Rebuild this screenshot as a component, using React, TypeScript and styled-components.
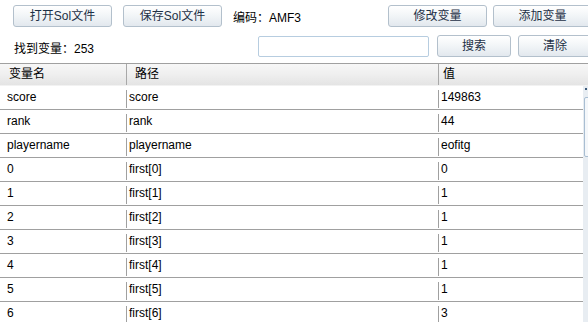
import styled, { createGlobalStyle } from 'styled-components'

const GlobalStyle = createGlobalStyle`
  html, body {
    margin: 0;
    padding: 0;
    background: #fff;
    overflow: hidden;
  }
  body {
    font-family: "Liberation Sans", "Noto Sans CJK SC", sans-serif;
    font-size: 12px;
    color: #000;
  }
`

const rows: [string, string, string][] = [
  ['score', 'score', '149863'],
  ['rank', 'rank', '44'],
  ['playername', 'playername', 'eofitg'],
  ['0', 'first[0]', '0'],
  ['1', 'first[1]', '1'],
  ['2', 'first[2]', '1'],
  ['3', 'first[3]', '1'],
  ['4', 'first[4]', '1'],
  ['5', 'first[5]', '1'],
  ['6', 'first[6]', '3'],
]

const App = () => {
  return (
    <StyledPage>
      <GlobalStyle />
      <StyledToolbar>
        <StyledButton>打开Sol文件</StyledButton>
        <StyledButton $gap={11}>保存Sol文件</StyledButton>
        <StyledLabel>编码：AMF3</StyledLabel>
        <StyledButton $push>修改变量</StyledButton>
        <StyledButton $gap={6}>添加变量</StyledButton>
      </StyledToolbar>

      <StyledSearchBar>
        <StyledCount>找到变量：253</StyledCount>
        <StyledInput type="text" />
        <StyledButton $width={74} $gap={8}>
          搜索
        </StyledButton>
        <StyledButton $width={74} $gap={7}>
          清除
        </StyledButton>
      </StyledSearchBar>

      <StyledTable>
        <StyledHeader>
          <StyledHeadCell $pad={9}>变量名</StyledHeadCell>
          <StyledHeadCell $pad={8} $line>
            路径
          </StyledHeadCell>
          <StyledHeadCell $pad={4} $line>
            值
          </StyledHeadCell>
        </StyledHeader>
        <StyledBody>
          <StyledRows>
            {rows.map(([name, path, value]) => (
              <StyledRow key={path}>
                <StyledCell>{name}</StyledCell>
                <StyledCell $line>{path}</StyledCell>
                <StyledCell $line>{value}</StyledCell>
              </StyledRow>
            ))}
          </StyledRows>
          <StyledScrollbar>
            <div className="arrow" />
            <div className="thumb" />
          </StyledScrollbar>
        </StyledBody>
      </StyledTable>
    </StyledPage>
  )
}

const StyledPage = styled.div`
  width: 600px;
  height: 322px;
  overflow: hidden;
`

const StyledToolbar = styled.div`
  display: flex;
  align-items: center;
  height: 22px;
  padding: 5px 0 0 13px;
  width: 579px;
`

const StyledButton = styled.button<{ $width?: number; $gap?: number; $push?: boolean }>`
  flex-shrink: 0;
  width: ${(props) => props.$width || 99}px;
  height: 22px;
  margin-left: ${(props) => (props.$push ? 'auto' : `${props.$gap || 0}px`)};
  padding: 0;
  border: 1px solid #b3c0cc;
  border-radius: 3px;
  background: linear-gradient(#ffffff 0%, #f3f6f8 45%, #e2e8ee 100%);
  font-family: "Liberation Sans", "Noto Sans CJK SC", sans-serif;
  font-size: 12px;
  color: #1d3046;
  line-height: 20px;
  text-align: center;
`

const StyledLabel = styled.span`
  margin-left: 11px;
  white-space: nowrap;
`

const StyledSearchBar = styled.div`
  display: flex;
  align-items: center;
  height: 22px;
  padding: 8px 0 0 0;
  margin-bottom: 6px;
`

const StyledCount = styled.span`
  width: 244px;
  padding-left: 14px;
  margin-top: 2px;
  white-space: nowrap;
`

const StyledInput = styled.input`
  box-sizing: border-box;
  width: 171px;
  height: 21px;
  margin: 1px 0 0 0;
  padding: 0 3px;
  border: 1px solid #b7cde0;
  border-radius: 2px;
  background: #fff;
  outline: none;
`

const StyledTable = styled.div`
  border-top: 1px solid #a0a0a0;
`

const StyledHeader = styled.div`
  display: grid;
  grid-template-columns: 126px 312px 1fr;
  height: 21px;
  background: linear-gradient(#f7f7f7 0%, #efefef 50%, #e4e4e4 100%);
  border-bottom: 1px solid #f2f2f2;
`

const StyledHeadCell = styled.div<{ $pad: number; $line?: boolean }>`
  padding-left: ${(props) => props.$pad}px;
  border-left: ${(props) => (props.$line ? '1px solid #a8a8a8' : 'none')};
  line-height: 21px;
  white-space: nowrap;
`

const StyledBody = styled.div`
  display: flex;
`

const StyledRows = styled.div`
  width: 583px;
  flex-shrink: 0;
`

const StyledRow = styled.div`
  display: grid;
  grid-template-columns: 126px 312px 1fr;
  height: 23px;
  border-bottom: 1px solid #a0a0a0;
`

const StyledCell = styled.div<{ $line?: boolean }>`
  height: 18px;
  margin-top: ${(props) => (props.$line ? 4 : 0)}px;
  padding-left: ${(props) => (props.$line ? 2 : 7)}px;
  padding-top: ${(props) => (props.$line ? 0 : 4)}px;
  border-left: ${(props) => (props.$line ? '1px solid #a0a0a0' : 'none')};
  line-height: 15px;
  white-space: nowrap;
`

const StyledScrollbar = styled.div`
  width: 5px;
  height: 240px;
  background: #e8edf2;
  position: relative;

  .arrow {
    position: absolute;
    top: 2px;
    left: 2px;
    width: 2px;
    height: 2px;
    background: #3b5a7a;
  }

  .thumb {
    position: absolute;
    top: 11px;
    left: 1px;
    width: 10px;
    height: 60px;
    box-sizing: border-box;
    border: 1px solid #a9bed2;
    border-radius: 2px;
    background: #f4f7fa;
  }
`

export default App
